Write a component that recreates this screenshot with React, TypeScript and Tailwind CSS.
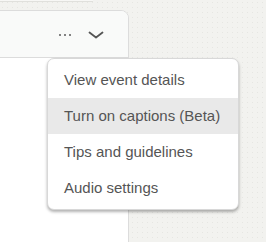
import React from "react";

export default function App() {
  const items = [
    "View event details",
    "Turn on captions (Beta)",
    "Tips and guidelines",
    "Audio settings",
  ];
  return (
    <div
      className="relative w-[266px] h-[242px] overflow-hidden bg-[#f2f2ef] bg-[radial-gradient(#e6e6e2_0.6px,transparent_0.7px)] bg-[length:5px_5px]"
      style={{ fontFamily: '"Liberation Sans", Arial, sans-serif' }}
    >
      <div className="absolute left-0 top-0 w-[93px] h-[2px] bg-[#f7f7f5] border-b border-[#e0e0dc]" />
      <div className="absolute left-[-10px] top-[10px] w-[139px] h-[260px] bg-white border border-[#dcdcdc] rounded-tr-[8px] overflow-hidden">
        <div className="h-[47px] bg-[#f9faf9] border-b border-[#dcdcdc] flex items-center justify-end pr-[24px] gap-[16px]">
          <svg width="14" height="4" viewBox="0 0 14 4" className="mt-[1px]">
            <circle cx="2" cy="2" r="1.1" fill="#666" />
            <circle cx="7" cy="2" r="1.1" fill="#666" />
            <circle cx="12" cy="2" r="1.1" fill="#666" />
          </svg>
          <svg width="16" height="8" viewBox="0 0 16 8" className="mt-[2px]">
            <path d="M1.5 1.5 L8 6.5 L14.5 1.5" fill="none" stroke="#555" strokeWidth="1.8" strokeLinecap="round" strokeLinejoin="round" />
          </svg>
        </div>
      </div>
      <div className="absolute left-[47px] top-[58px] w-[192px] bg-white border border-[#d8d8d8] rounded-[7px] py-[3px] shadow-[0_2px_3px_rgba(0,0,0,0.3)]">
        {items.map((t, i) => (
          <div
            key={t}
            className={`h-[36px] flex items-center pl-[16px] text-[15px] text-[#555555] ${i === 1 ? "bg-[#e9e9e9]" : ""}`}
          >
            {t}
          </div>
        ))}
      </div>
    </div>
  );
}
